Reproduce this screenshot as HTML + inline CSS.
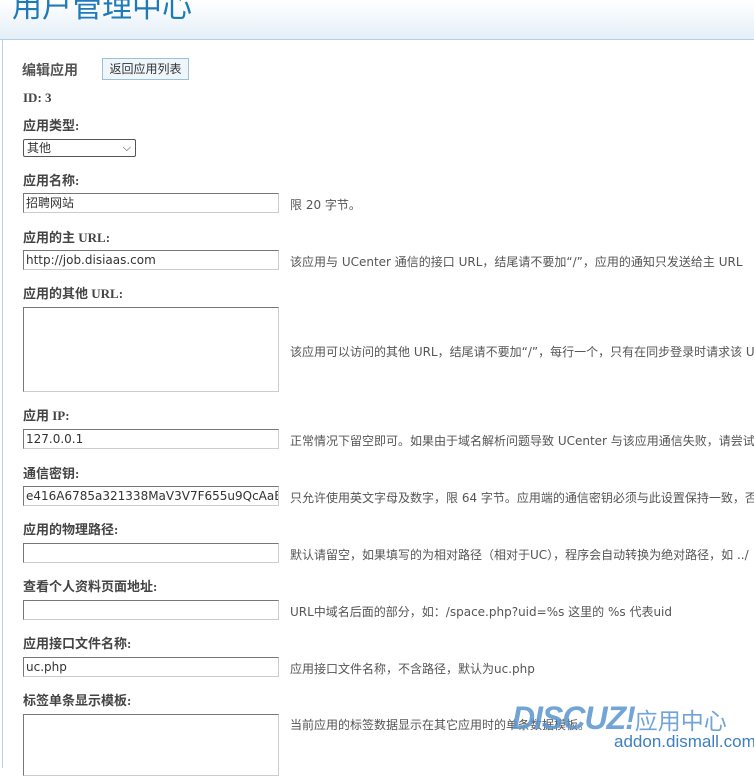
<!DOCTYPE html>
<html><head><meta charset="utf-8"><style>
body{margin:0;width:754px;height:768px;overflow:hidden;background:#fff;font-family:"DejaVu Sans","Noto Sans CJK SC",sans-serif;font-size:12px;color:#333;position:relative}
.hd{position:absolute;left:0;top:0;width:754px;height:39px;background:linear-gradient(#fff,#e4eff8);border-bottom:1px solid #b8cfe0}
.hd span{position:absolute;left:12px;top:-18px;font-size:30px;color:#1f7ab8;font-family:"Noto Sans CJK SC",sans-serif}
.lb{position:absolute;left:2px;top:40px;width:1px;height:728px;background:#b8cfe0}
.a{position:absolute;white-space:nowrap}
.l{left:23px;font-weight:bold;color:#444;font-size:13px;font-family:"Liberation Serif","Noto Sans CJK SC",serif}
.i{left:23px;width:252px;height:18px;border:1px solid #ccc;border-top-color:#777;border-left-color:#777;line-height:18px;padding-left:2px;font-size:12px;color:#333;overflow:hidden}
.h{left:290px;color:#555;font-size:12px}
</style></head><body>
<div class="hd"><span>用户管理中心</span></div>
<div class="lb"></div>
<div class="a" style="left:22px;top:60px;font-size:14px;font-weight:bold;color:#555;font-family:'Noto Sans CJK SC',sans-serif">编辑应用</div>
<div class="a" style="left:102px;top:58px;width:85px;height:20px;border:1px solid #9cc0d8;background:#eef6fb;text-align:center;line-height:20px;font-size:12px">返回应用列表</div>
<div class="a l" style="top:90px">ID: 3</div>
<div class="a l" style="top:115px">应用类型:</div>
<div class="a" style="left:23px;top:139px;width:108px;height:16px;border:1px solid #555;border-radius:2px;line-height:16px;padding-left:3px;font-size:12px">其他<span style="position:absolute;right:4px;top:0px;font-size:11px">&#x2335;</span></div>
<div class="a l" style="top:170px">应用名称:</div>
<div class="a i" style="top:193px">招聘网站</div>
<div class="a h" style="top:196px">限 20 字节。</div>
<div class="a l" style="top:227px">应用的主 URL:</div>
<div class="a i" style="top:250px">http://job.disiaas.com</div>
<div class="a h" style="top:253px">该应用与 UCenter 通信的接口 URL，结尾请不要加“/”，应用的通知只发送给主 URL</div>
<div class="a l" style="top:283px">应用的其他 URL:</div>
<div class="a i" style="top:307px;height:83px"></div>
<div class="a h" style="top:343px">该应用可以访问的其他 URL，结尾请不要加“/”，每行一个，只有在同步登录时请求该 URL</div>
<div class="a l" style="top:405px">应用 IP:</div>
<div class="a i" style="top:429px">127.0.0.1</div>
<div class="a h" style="top:432px">正常情况下留空即可。如果由于域名解析问题导致 UCenter 与该应用通信失败，请尝试设置</div>
<div class="a l" style="top:463px">通信密钥:</div>
<div class="a i" style="top:486px">e416A6785a321338MaV3V7F655u9QcAaE</div>
<div class="a h" style="top:489px">只允许使用英文字母及数字，限 64 字节。应用端的通信密钥必须与此设置保持一致，否则</div>
<div class="a l" style="top:519px">应用的物理路径:</div>
<div class="a i" style="top:543px"></div>
<div class="a h" style="top:546px">默认请留空，如果填写的为相对路径（相对于UC），程序会自动转换为绝对路径，如 ../</div>
<div class="a l" style="top:576px">查看个人资料页面地址:</div>
<div class="a i" style="top:600px"></div>
<div class="a h" style="top:603px">URL中域名后面的部分，如：/space.php?uid=%s 这里的 %s 代表uid</div>
<div class="a l" style="top:633px">应用接口文件名称:</div>
<div class="a i" style="top:657px">uc.php</div>
<div class="a h" style="top:660px">应用接口文件名称，不含路径，默认为uc.php</div>
<div class="a l" style="top:690px">标签单条显示模板:</div>
<div class="a i" style="top:714px;height:60px"></div>
<div class="a h" style="top:716px">当前应用的标签数据显示在其它应用时的单条数据模板。</div>
<div class="a" style="left:512px;top:700px;font-size:32px;font-style:italic;font-weight:bold;color:#5a95d0;opacity:.85;font-family:'Liberation Sans',sans-serif;letter-spacing:-1px">DISCUZ!<span style="font-style:normal;font-weight:normal;font-size:23px;letter-spacing:0;font-family:'Noto Sans CJK SC',sans-serif">应用中心</span></div>
<div class="a" style="left:614px;top:732px;font-size:17px;color:#3d7fc0;font-family:'Liberation Sans',sans-serif">addon.dismall.com</div>
</body></html>
